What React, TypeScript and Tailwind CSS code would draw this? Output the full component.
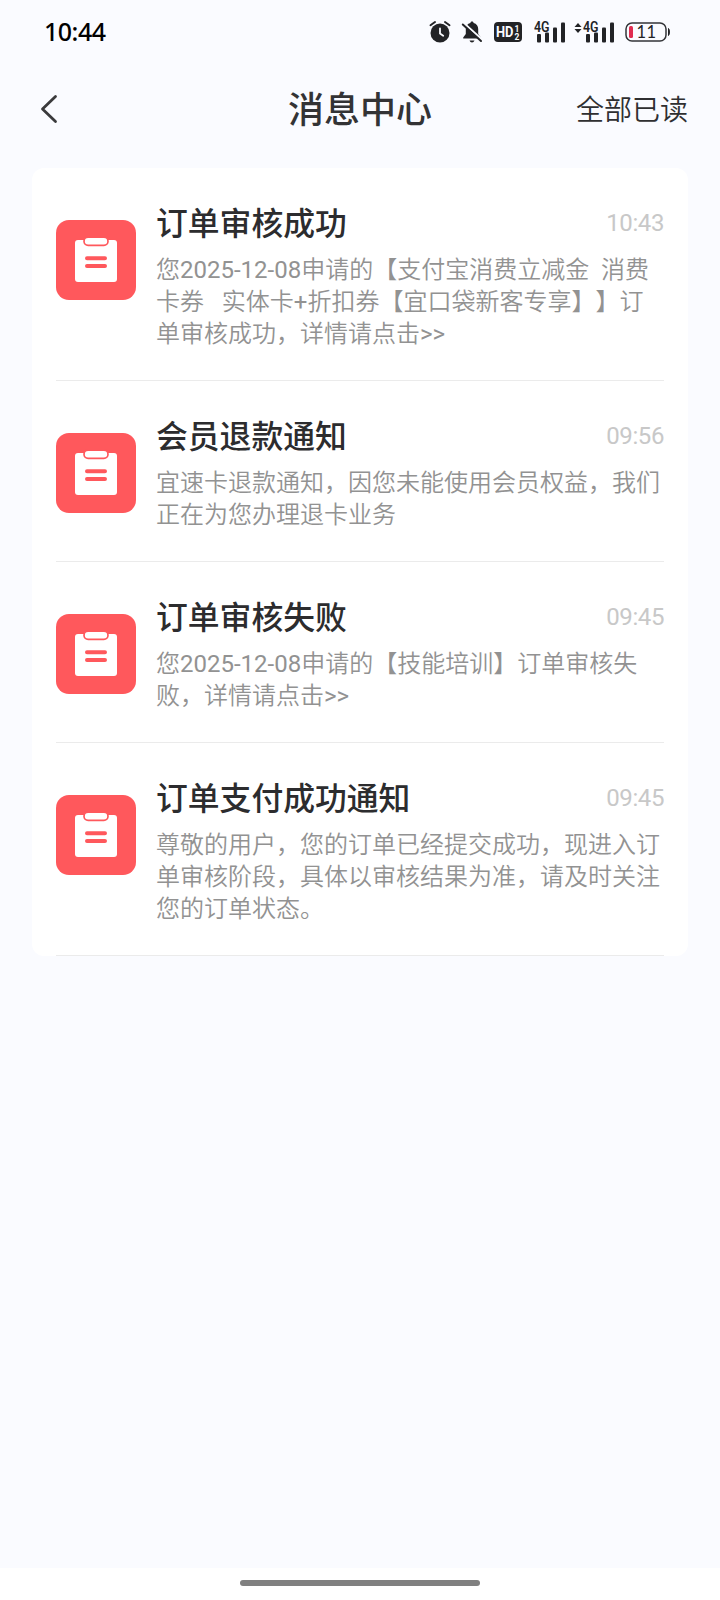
import React from 'react';

type Message = {
    id: number;
    title: string;
    time: string;
    content: string;
};

const messages: Message[] = [
    {
        id: 1,
        title: '订单审核成功',
        time: '10:43',
        content: '您2025-12-08申请的【支付宝消费立减金  消费\n卡券   实体卡+折扣券【宜口袋新客专享】】订\n单审核成功，详情请点击>>',
    },
    {
        id: 2,
        title: '会员退款通知',
        time: '09:56',
        content: '宜速卡退款通知，因您未能使用会员权益，我们\n正在为您办理退卡业务',
    },
    {
        id: 3,
        title: '订单审核失败',
        time: '09:45',
        content: '您2025-12-08申请的【技能培训】订单审核失\n败，详情请点击>>',
    },
    {
        id: 4,
        title: '订单支付成功通知',
        time: '09:45',
        content: '尊敬的用户，您的订单已经提交成功，现进入订\n单审核阶段，具体以审核结果为准，请及时关注\n您的订单状态。',
    },
];

const AlarmIcon = () => (
    <svg width="22" height="24" viewBox="0 0 22 24" fill="none">
        <circle cx="11" cy="13" r="9.5" fill="#222326" />
        <path d="M1.5 5.2 6 2M20.5 5.2 16 2" stroke="#222326" strokeWidth="2" strokeLinecap="round" />
        <path d="M11 8.5v5l3.2 2.2" stroke="#fafbff" strokeWidth="1.8" strokeLinecap="round" />
    </svg>
);

const MutedIcon = () => (
    <svg width="22" height="24" viewBox="0 0 22 24" fill="none">
        <path d="M11 1.5c1 0 1.6.6 1.6 1.5 3 .8 4.6 3 4.6 6v5l2.6 3.6v.9H2.2v-.9L4.8 14V9c0-3 1.6-5.2 4.6-6 0-.9.6-1.5 1.6-1.5Z" fill="#222326" />
        <path d="M8.5 20.5h5c-.5 1.3-1.4 1.9-2.5 1.9s-2-.6-2.5-1.9Z" fill="#222326" />
        <path d="M3 3.2 21.5 20" stroke="#fafbff" strokeWidth="2.2" />
        <path d="M1.8 4.5 20 21" stroke="#222326" strokeWidth="2" strokeLinecap="round" />
    </svg>
);

const HdIcon = () => (
    <svg width="28" height="20" viewBox="0 0 28 20">
        <rect width="28" height="20" rx="4" fill="#222326" />
        <g fill="#fafbff" className="font-['Roboto',sans-serif] font-bold">
            <text x="2" y="15" fontSize="14.5" textLength="17.5" lengthAdjust="spacingAndGlyphs">HD</text>
            <text x="20.5" y="9.5" fontSize="8.5">1</text>
            <text x="20.5" y="17.5" fontSize="8.5">2</text>
        </g>
    </svg>
);

const SignalIcon = ({ arrows = false }: { arrows?: boolean }) => (
    <svg width={arrows ? 41 : 32} height="24" viewBox={arrows ? '-9 0 41 24' : '0 0 32 24'}>
        {arrows && <path d="m-5 3 3.5 4h-7ZM-5 13l3.5-4h-7Z" fill="#222326" />}
        <g fill="#222326">
            <rect x="3" y="14" width="4" height="8.5" rx="1" />
            <rect x="11" y="12.5" width="4" height="10" rx="1" />
            <rect x="19" y="7.5" width="4" height="15" rx="1" />
            <rect x="27" y="2.5" width="4" height="20" rx="1" />
        </g>
        <text x="0" y="11.5" fontSize="14" fill="#222326" textLength="15.5" lengthAdjust="spacingAndGlyphs" className="font-['Roboto',sans-serif] font-semibold">4G</text>
    </svg>
);

const BatteryIcon = () => (
    <svg width="46" height="20" viewBox="0 0 46 20">
        <rect x="1" y="1" width="40" height="18" rx="6" fill="none" stroke="#333438" strokeWidth="1.5" />
        <rect x="4" y="4" width="4" height="12" rx="1.5" fill="#e02c50" />
        <path d="M43.5 6.5c1.2.8 1.2 6.2 0 7Z" fill="#222326" stroke="#222326" />
        <text x="11.5" y="16" fontSize="16.5" letterSpacing="0.5" fill="#222326" className="font-['Lato',sans-serif]">11</text>
    </svg>
);

const OrderIcon = () => (
    <svg width="80" height="80" viewBox="0 0 80 80" className="shrink-0">
        <rect width="80" height="80" rx="13" fill="#ff585c" />
        <rect x="19" y="20" width="42" height="42" rx="3" fill="#fff" />
        <rect x="28" y="17.2" width="24" height="8.2" rx="4.1" fill="#fff" stroke="#ff585c" strokeWidth="1.7" />
        <path d="M31 38.2h18M31 46h18" stroke="#ff585c" strokeWidth="4" strokeLinecap="round" />
    </svg>
);

const StatusBar = () => (
    <div className="flex h-16 items-center justify-between pr-[49px] pl-11">
        <span className="font-['Noto_Sans','Noto_Sans_CJK_SC',sans-serif] text-[25px] font-medium tracking-[-0.5px] text-black">10:44</span>
        <div className="flex items-center">
            <AlarmIcon />
            <div className="ml-2.5"><MutedIcon /></div>
            <div className="ml-[11px]"><HdIcon /></div>
            <div className="ml-3"><SignalIcon /></div>
            <div className="ml-2"><SignalIcon arrows /></div>
            <div className="ml-2.5"><BatteryIcon /></div>
        </div>
    </div>
);

const MessageItem = ({ message }: { message: Message }) => (
    <li className="mx-6 flex border-b border-[#ebebeb] pb-[30px]">
        <div className="mt-[52px] mr-5 h-20">
            <OrderIcon />
        </div>
        <div className="flex-1 pt-8">
            <div className="flex h-[46px] items-center justify-between">
                <h2 className="pt-0.5 text-[31.8px] leading-[46px] font-medium text-[#2c2c2e]">{message.title}</h2>
                <span className="text-2xl tracking-[-0.4px] text-[#c8c8c8]">{message.time}</span>
            </div>
            <p className="mt-2 font-['Roboto','Noto_Sans_CJK_SC_DemiLight','Noto_Sans_CJK_SC',sans-serif] text-2xl leading-8 whitespace-pre text-[#929292] [text-spacing-trim:space-all]">{message.content}</p>
        </div>
    </li>
);

const App = () => {
    return (
        <div className="flex h-[1600px] w-[720px] flex-col overflow-hidden bg-[#fafbff] font-['Roboto','Noto_Sans_CJK_SC',sans-serif]">
            <StatusBar />
            <header className="grid h-[104px] grid-cols-3 items-start px-8 pt-[21px]">
                <button className="flex h-12 items-center pl-2">
                    <svg width="18" height="30" viewBox="0 0 18 30" fill="none">
                        <path d="M15.5 2.5 2.5 15l13 12.5" stroke="#3a3a3c" strokeWidth="2.8" strokeLinecap="round" strokeLinejoin="round" />
                    </svg>
                </button>
                <h1 className="text-center text-4xl leading-[52px] font-medium text-[#333335]">消息中心</h1>
                <button className="text-right text-[28px] leading-[52px] font-[350] text-[#2f2f31]">全部已读</button>
            </header>
            <ul className="mx-8 rounded-xl bg-white">
                {messages.map(message => (
                    <MessageItem key={message.id} message={message} />
                ))}
            </ul>
            <div className="mt-auto flex h-8 justify-center bg-white pt-3">
                <div className="h-1.5 w-60 rounded-full bg-[#808080]" />
            </div>
        </div>
    );
};

export default App;
